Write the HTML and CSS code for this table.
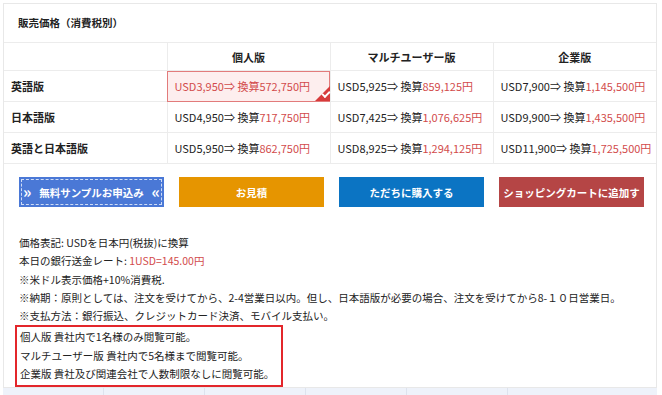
FILE: index.html
```html
<!DOCTYPE html>
<html>
<head>
    <title>販売価格</title>
    <link rel="stylesheet" href="styles.css">
</head>
<body>
    <div class="panel">
        <h3 class="panel-title">販売価格（消費税別）</h3>
        <table class="price-table">
            <tr>
                <th class="row-head"></th>
                <th>個人版</th>
                <th>マルチユーザー版</th>
                <th>企業版</th>
            </tr>
            <tr>
                <td class="row-head">英語版</td>
                <td class="selected">USD3,950⇒ 換算572,750円<span class="check"></span></td>
                <td>USD5,925⇒ 換算<span class="yen">859,125円</span></td>
                <td>USD7,900⇒ 換算<span class="yen">1,145,500円</span></td>
            </tr>
            <tr>
                <td class="row-head">日本語版</td>
                <td>USD4,950⇒ 換算<span class="yen">717,750円</span></td>
                <td>USD7,425⇒ 換算<span class="yen">1,076,625円</span></td>
                <td>USD9,900⇒ 換算<span class="yen">1,435,500円</span></td>
            </tr>
            <tr>
                <td class="row-head">英語と日本語版</td>
                <td>USD5,950⇒ 換算<span class="yen">862,750円</span></td>
                <td>USD8,925⇒ 換算<span class="yen">1,294,125円</span></td>
                <td>USD11,900⇒ 換算<span class="yen">1,725,500円</span></td>
            </tr>
        </table>

        <div class="button-group">
            <button class="sample-btn"><span class="chev">»</span>無料サンプルお申込み<span class="chev">«</span></button>
            <button class="quote-btn">お見積</button>
            <button class="buy-btn">ただちに購入する</button>
            <button class="cart-btn">ショッピングカートに追加す</button>
        </div>

        <div class="notes">
            <p>価格表記: USDを日本円(税抜)に換算</p>
            <p>本日の銀行送金レート: <span class="yen">1USD=145.00円</span></p>
            <p>※米ドル表示価格+10%消費税.</p>
            <p>※納期：原則としては、注文を受けてから、2-4営業日以内。但し、日本語版が必要の場合、注文を受けてから8-１０日営業日。</p>
            <p>※支払方法：銀行振込、クレジットカード決済、モバイル支払い。</p>
            <div class="license-box">
                <p>個人版 貴社内で1名様のみ閲覧可能。</p>
                <p>マルチユーザー版 貴社内で5名様まで閲覧可能。</p>
                <p>企業版 貴社及び関連会社で人数制限なしに閲覧可能。</p>
            </div>
        </div>
    </div>
    <div class="next-table">
        <div></div><div></div><div></div><div></div><div></div>
    </div>
</body>
</html>
```

FILE: styles.css
```css
body {
    margin: 0;
    background: #fff;
    font-family: "Noto Sans CJK JP", "Noto Sans", sans-serif;
    color: #333;
}
.panel {
    margin: 3px 5px 0 3px;
    border: 1px solid #e8e8e8;
    height: 385px;
    box-sizing: border-box;
}
.panel-title {
    margin: 0;
    padding: 10px 14px 0;
    height: 38px;
    box-sizing: border-box;
    font-size: 10.5px;
    line-height: 18px;
    font-weight: bold;
    color: #222;
}
.price-table {
    width: 100%;
    table-layout: fixed;
    border-collapse: collapse;
    font-size: 11px;
}
.price-table th,
.price-table td {
    border: 1px solid #ececec;
    padding: 0 7px;
    height: 30px;
    text-align: left;
    white-space: nowrap;
}
.price-table tr:first-child th,
.price-table tr:first-child td {
    height: 27px;
}
.price-table th {
    text-align: center;
    font-weight: bold;
    color: #222;
}
.price-table tr > :first-child {
    border-left: none;
}
.price-table tr > :last-child {
    border-right: none;
}
.price-table .row-head {
    font-weight: bold;
    color: #222;
}
.price-table td {
    color: #222;
}
.yen {
    color: #d24b4b;
}
.price-table .selected {
    position: relative;
    background: #fdeeee;
    color: #d24b4b;
    outline: 1px solid #e27b7b;
    outline-offset: -1px;
}
.check {
    position: absolute;
    right: 0;
    bottom: 0;
    width: 0;
    height: 0;
    border-left: 15px solid transparent;
    border-bottom: 15px solid #d73a3a;
}
.check::after {
    content: "";
    position: absolute;
    left: -8px;
    top: 5px;
    width: 6px;
    height: 3px;
    border-left: 2px solid #fff;
    border-bottom: 2px solid #fff;
    transform: rotate(-45deg);
}
.button-group {
    display: flex;
    gap: 15px;
    padding: 13px 0 0 15px;
}
button {
    width: 145px;
    height: 30px;
    border: none;
    font-family: inherit;
    font-size: 10.5px;
    font-weight: bold;
    color: #fff;
    padding: 0;
}
.sample-btn {
    background: #4a78d6;
    outline: 1px dashed #cfdcf5;
    outline-offset: -3px;
    display: flex;
    align-items: center;
    justify-content: space-between;
    padding: 0 4px;
}
.chev {
    font-size: 16px;
    line-height: 1;
    margin-top: -2px;
}
.quote-btn {
    background: #e69500;
}
.buy-btn {
    background: #0b74c3;
}
.cart-btn {
    background: #b54545;
}
.notes {
    padding: 27px 0 0 15px;
    font-size: 10.5px;
    color: #222;
}
.notes p {
    margin: 0;
    line-height: 18.3px;
}
.license-box {
    display: inline-block;
    margin: 0 0 0 -4px;
    padding: 1px 7px 2px 3px;
    border: 2px solid #e3262b;
}
.next-table {
    display: flex;
    height: 7px;
    background: #eef2fa;
    margin: 0 5px 0 3px;
}
.next-table div {
    width: 100px;
    border-right: 1px solid #dde3ee;
}
```
